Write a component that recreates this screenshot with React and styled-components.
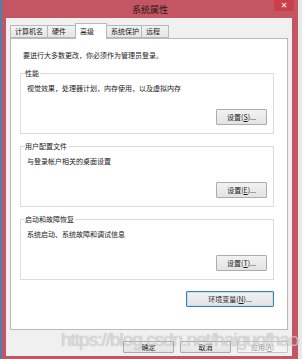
import React from "react";
import styled, { createGlobalStyle } from "styled-components";

const GlobalStyle = createGlobalStyle`
  html, body {
    margin: 0;
    padding: 0;
    background: #e8e8e8;
  }
  body {
    font-family: "Noto Sans CJK SC", "Liberation Sans", sans-serif;
    font-size: 7px;
    color: #1a1a1a;
  }
`;

const Screen = styled.div`
  position: relative;
  display: flex;
  width: 302px;
  height: 359px;
  overflow: hidden;
`;

const DesktopEdge = styled.div`
  width: 2px;
  background: #4f7fae;
`;

const Window = styled.div`
  width: 296px;
  display: flex;
  flex-direction: column;
  background: #c45562;
`;

const TitleBar = styled.div`
  height: 18px;
  display: grid;
  grid-template-columns: 1fr auto 1fr;
  align-items: start;
`;

const Title = styled.div`
  grid-column: 2;
  font-size: 9px;
  line-height: 19px;
  color: #2b1a1c;
`;

const CloseButton = styled.div`
  grid-column: 3;
  justify-self: end;
  margin-right: 4px;
  width: 20px;
  height: 11px;
  background: #cb3f4b;
  color: #fff;
  font-family: "DejaVu Sans", sans-serif;
  font-weight: bold;
  font-size: 8px;
  line-height: 11px;
  text-align: center;
`;

const Client = styled.div`
  margin: 0 6px 0 4px;
  height: 338px;
  box-sizing: border-box;
  padding: 5px 4px 0 4px;
  background: #f0f0f0;
  display: flex;
  flex-direction: column;
`;

const TabRow = styled.div`
  height: 15px;
  display: flex;
  align-items: flex-end;
`;

const Tab = styled.div`
  position: relative;
  box-sizing: border-box;
  width: ${(p) => p.w}px;
  height: ${(p) => (p.active ? 16 : 13)}px;
  margin-right: -1px;
  margin-bottom: ${(p) => (p.active ? -1 : 0)}px;
  z-index: ${(p) => (p.active ? 2 : 1)};
  padding-left: 4px;
  border: 1px solid #b9b9b9;
  border-bottom: ${(p) => (p.active ? "none" : "1px solid #b9b9b9")};
  background: ${(p) =>
    p.active ? "#fff" : "linear-gradient(#f2f2f2, #e6e6e6)"};
  line-height: ${(p) => (p.active ? 14 : 11)}px;
  white-space: nowrap;
`;

const Panel = styled.div`
  box-sizing: border-box;
  width: 278px;
  height: 292px;
  border: 1px solid #b9b9b9;
  background: #fff;
  padding: 12px 13px 0 9px;
  display: flex;
  flex-direction: column;
`;

const Intro = styled.div`
  margin-left: 3px;
  line-height: 9px;
`;

const Group = styled.div`
  box-sizing: border-box;
  height: 61px;
  margin-top: ${(p) => p.gap}px;
  border: 1px solid #dcdcdc;
  padding: 0 6px 0 4px;
  display: flex;
  flex-direction: column;
`;

const Legend = styled.div`
  align-self: flex-start;
  margin-top: -5px;
  padding: 0 1px 0 0;
  background: #fff;
  line-height: 9px;
`;

const Desc = styled.div`
  margin: 6px 0 0 2px;
  line-height: 9px;
`;

const Button = styled.div`
  box-sizing: border-box;
  width: ${(p) => p.w}px;
  height: ${(p) => p.h || 16}px;
  border: 1px solid ${(p) => (p.primary ? "#3c7fb1" : p.disabled ? "#c6c6c6" : "#acacac")};
  border-radius: 1px;
  background: ${(p) =>
    p.disabled ? "#f4f4f4" : "linear-gradient(#f2f2f2, #e3e3e3)"};
  color: ${(p) => (p.disabled ? "#9a9a9a" : "#1a1a1a")};
  display: flex;
  align-items: center;
  justify-content: center;
  line-height: 9px;
  white-space: nowrap;
`;

const GroupButton = styled(Button)`
  align-self: flex-end;
  margin-top: 16px;
`;

const EnvButton = styled(Button)`
  align-self: flex-end;
  margin-top: 11px;
  box-shadow: inset 0 0 0 1px #bfe0f5;
`;

const Key = styled.span`
  text-decoration: underline;
`;

const FooterRow = styled.div`
  margin-top: 11px;
  display: flex;
  justify-content: flex-end;
  gap: 6px;
`;

const Watermark = styled.div`
  position: absolute;
  left: 61px;
  top: 329px;
  font-family: "Liberation Sans", sans-serif;
  font-size: 19px;
  letter-spacing: -1px;
  color: rgba(255, 255, 255, 0.55);
  text-shadow: 0 0 1px rgba(60, 60, 60, 0.45);
  white-space: nowrap;
  pointer-events: none;
`;

const tabs = [
  { label: "计算机名", w: 38 },
  { label: "硬件", w: 29 },
  { label: "高级", w: 32, active: true },
  { label: "系统保护", w: 36 },
  { label: "远程", w: 28 },
];

const groups = [
  { title: "性能", desc: "视觉效果，处理器计划，内存使用，以及虚拟内存", key: "S", gap: 13 },
  { title: "用户配置文件", desc: "与登录帐户相关的桌面设置", key: "E", gap: 12 },
  { title: "启动和故障恢复", desc: "系统启动、系统故障和调试信息", key: "T", gap: 12 },
];

const App = () => {
  return (
    <Screen>
      <GlobalStyle />
      <DesktopEdge />
      <Window>
        <TitleBar>
          <Title>系统属性</Title>
          <CloseButton>✕</CloseButton>
        </TitleBar>
        <Client>
          <TabRow>
            {tabs.map((t) => (
              <Tab key={t.label} w={t.w} active={t.active}>
                {t.label}
              </Tab>
            ))}
          </TabRow>
          <Panel>
            <Intro>要进行大多数更改，你必须作为管理员登录。</Intro>
            {groups.map((g) => (
              <Group key={g.title} gap={g.gap}>
                <Legend>{g.title}</Legend>
                <Desc>{g.desc}</Desc>
                <GroupButton w={51}>
                  设置(<Key>{g.key}</Key>)...
                </GroupButton>
              </Group>
            ))}
            <EnvButton w={88} primary>
              环境变量(<Key>N</Key>)...
            </EnvButton>
          </Panel>
          <FooterRow>
            <Button w={51} h={12}>确定</Button>
            <Button w={51} h={12}>取消</Button>
            <Button w={51} h={12} disabled>
              应用(<Key>A</Key>)
            </Button>
          </FooterRow>
        </Client>
      </Window>
      <Watermark>https://blog.csdn.net/haiguofhao</Watermark>
    </Screen>
  );
};

export default App;
